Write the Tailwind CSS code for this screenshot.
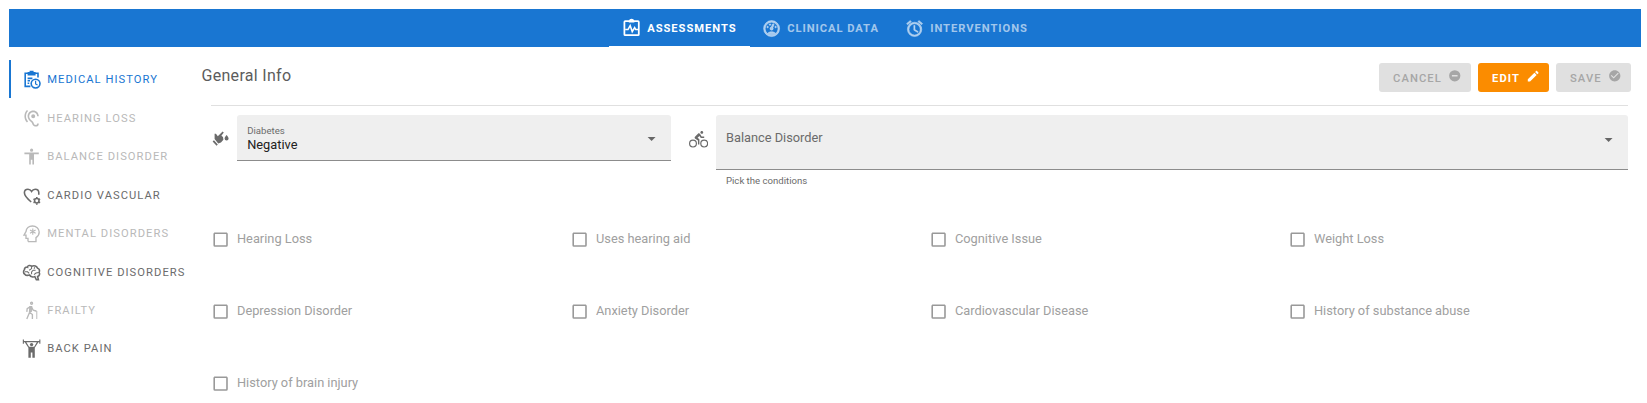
<!DOCTYPE html>
<html lang="en">
<head>
<meta charset="utf-8">
<title>Medical History</title>
<script src="https://cdn.jsdelivr.net/npm/@tailwindcss/browser@4"></script>
</head>
<body class="bg-white h-[403px] overflow-hidden font-[Roboto,sans-serif] px-[9px] pt-[9px]">
<svg class="hidden">
  <symbol id="box" viewBox="0 0 24 24"><path d="M19,3H5C3.89,3 3,3.89 3,5V19A2,2 0 0,0 5,21H19A2,2 0 0,0 21,19V5C21,3.89 20.1,3 19,3M19,5V19H5V5H19Z"/></symbol>
  <symbol id="down" viewBox="0 0 24 24"><path d="M7,10L12,15L17,10H7Z"/></symbol>
</svg>
<header class="flex h-[38px] w-[1632px] justify-center bg-[#1976d2] text-[11.2px] leading-none font-bold tracking-[0.95px] text-white">
  <div class="flex w-[141px] items-center border-b border-white pl-[13px] pt-[2px]">
    <svg class="size-[19.2px] mr-[6px] mb-px fill-none stroke-current stroke-[2.2]" viewBox="0 0 24 24"><rect x="3" y="4" width="18" height="17.5" rx="1"/><path d="M8.500 4.500H15.500M10 3.500C10 1.500 14 1.500 14 3.500"/><path d="M4 14.500H7.500L10.200 9.500L12.800 17L15.800 12L17.200 14.500H20" stroke-width="1.900"/></svg>
    <span class="pt-px">ASSESSMENTS</span>
  </div>
  <div class="flex w-[142px] items-center pl-[12px] pt-px text-white/60">
    <svg class="size-[19.2px] mr-[6px] fill-current" viewBox="0 0 24 24"><path d="M12,2A10,10 0 0,0 2,12A10,10 0 0,0 12,22A10,10 0 0,0 22,12A10,10 0 0,0 12,2M12,4A8,8 0 0,1 20,12C20,14.4 19,16.5 17.3,18C15.900,16.700 14,16 12,16C10,16 8.200,16.700 6.700,18C5,16.500 4,14.400 4,12A8,8 0 0,1 12,4M14,5.890C13.620,5.900 13.260,6.150 13.100,6.540L11.810,9.770L11.710,10C11,10.130 10.410,10.600 10.140,11.260C9.730,12.290 10.230,13.450 11.260,13.860C12.290,14.270 13.450,13.770 13.860,12.740C14.120,12.080 14,11.320 13.570,10.760L13.670,10.500L14.960,7.290L14.970,7.260C15.170,6.750 14.920,6.170 14.410,5.960C14.280,5.910 14.150,5.890 14,5.890M10,6A1,1 0 0,0 9,7A1,1 0 0,0 10,8A1,1 0 0,0 11,7A1,1 0 0,0 10,6M7,9A1,1 0 0,0 6,10A1,1 0 0,0 7,11A1,1 0 0,0 8,10A1,1 0 0,0 7,9M17,9A1,1 0 0,0 16,10A1,1 0 0,0 17,11A1,1 0 0,0 18,10A1,1 0 0,0 17,9Z" class="stroke-current stroke-[0.8]"/></svg>
    <span>CLINICAL DATA</span>
  </div>
  <div class="flex w-[149px] items-center pl-[13px] pt-px text-white/60">
    <svg class="size-[19.2px] mr-[6px] fill-current" viewBox="0 0 24 24"><path class="stroke-current stroke-[0.7]" d="M12,20A7,7 0 0,1 5,13A7,7 0 0,1 12,6A7,7 0 0,1 19,13A7,7 0 0,1 12,20M12,4A9,9 0 0,0 3,13A9,9 0 0,0 12,22A9,9 0 0,0 21,13A9,9 0 0,0 12,4M12.5,8H11V14L15.750,16.850L16.500,15.620L12.500,13.250V8M7.880,3.390L6.600,1.860L2,5.710L3.290,7.240L7.880,3.390M22,5.720L17.400,1.860L16.110,3.390L20.710,7.250L22,5.720Z"/></svg>
    <span>INTERVENTIONS</span>
  </div>
</header>
<div class="flex">
  <nav class="mt-[13px] w-[192.5px] shrink-0 text-[11.2px] leading-none font-normal tracking-[1.05px] whitespace-nowrap text-[#6b6b6b]">
    <div class="flex h-[38.4px] items-center gap-[6px] border-l-2 border-[#1976d2] pl-[11px] pt-px text-[#1976d2]">
      <svg class="size-[19.2px] fill-none stroke-current stroke-2" viewBox="0 0 24 24"><path d="M10.500 20.500H4V4H20V9.500M8 3.500H16V6H8ZM10.500 3V1.800H13.500V3M7 10.500H13M7 13.500H10M7 16.500H9"/><circle cx="17" cy="17" r="5.500"/><path d="M17 13.500V17.500L19.500 18.800" stroke-width="1.500"/></svg>
      <span>MEDICAL HISTORY</span>
    </div>
    <div class="flex h-[38.4px] items-center gap-[6px] pl-[13px] pt-[2px] text-[#b9b9b9]">
      <svg class="size-[19.2px] fill-current" viewBox="0 0 24 24"><path d="M17,20C16.710,20 16.440,19.940 16.240,19.850C15.530,19.500 15.030,18.970 14.530,17.470C14,15.910 13.060,15.180 12.140,14.470C11.350,13.860 10.530,13.230 9.820,11.940C9.290,11 9,9.930 9,9C9,6.200 11.200,4 14,4C16.800,4 19,6.200 19,9H21C21,5.070 17.930,2 14,2C10.070,2 7,5.070 7,9C7,10.260 7.380,11.650 8.070,12.900C9,14.550 10.050,15.380 10.920,16.050C11.730,16.670 12.310,17.120 12.630,18.100C13.230,19.920 14,20.940 15.360,21.650C15.870,21.880 16.430,22 17,22A4,4 0 0,0 21,18H19A2,2 0 0,1 17,20M7.640,2.640L6.220,1.220C4.230,3.210 3,5.960 3,9C3,12.040 4.230,14.790 6.220,16.780L7.630,15.370C6,13.740 5,11.500 5,9C5,6.500 6,4.260 7.640,2.640M11.500,9A2.500,2.500 0 0,0 14,11.500A2.500,2.500 0 0,0 16.500,9A2.500,2.500 0 0,0 14,6.500A2.500,2.500 0 0,0 11.500,9Z"/></svg>
      <span>HEARING LOSS</span>
    </div>
    <div class="flex h-[38.4px] items-center gap-[6px] pl-[13px] pt-[1.6px] text-[#b9b9b9]">
      <svg class="size-[19.2px] fill-current" viewBox="0 0 24 24"><path d="M12 2a2 2 0 1 1 0 4a2 2 0 0 1 0-4M21 9H15V22H13V16H11V22H9V9H3V7H21Z"/></svg>
      <span>BALANCE DISORDER</span>
    </div>
    <div class="flex h-[38.4px] items-center gap-[6px] pl-[13px] pt-[2px]">
      <svg class="size-[19.2px] fill-none stroke-current stroke-2" viewBox="0 0 24 24"><path d="M11.500 20C5 14.500 3 12 3 8.500C3 5.500 5 4 7.500 4C9.500 4 11 5 12 6.700C13 5 14.500 4 16.500 4C19 4 21 5.500 21 8.500V11"/><circle cx="18.500" cy="18.500" r="2.800"/><path d="M18.500 13.700V15.200M18.500 21.800V23.300M14.400 16.100L15.700 16.900M21.300 20.100L22.600 20.900M14.400 20.900L15.700 20.100M21.300 16.900L22.600 16.100"/></svg>
      <span>CARDIO VASCULAR</span>
    </div>
    <div class="flex h-[38.4px] items-center gap-[6px] pl-[13px] pt-[2px] text-[#b9b9b9]">
      <svg class="size-[19.2px] fill-none stroke-current stroke-[1.7]" viewBox="0 0 24 24"><path d="M7.500 22V18H5V14H2.500L5 9.500C5.300 5.500 8.500 2.500 13 2.500C17.700 2.500 21.500 5.500 21.500 10C21.500 13 20 15.500 17.500 17V22H7.500"/><path d="M13.500 5.500V13.500M10 7.500L17 11.500M10 11.500L17 7.500" stroke-width="1.400"/></svg>
      <span>MENTAL DISORDERS</span>
    </div>
    <div class="flex h-[38.4px] items-center gap-[6px] pl-[13px] pt-[2px]">
      <svg class="size-[19.2px] fill-none stroke-current stroke-2" viewBox="0 0 24 24"><path d="M12 4C10 2.500 7.500 3 6.500 5C4.500 5 3 6.500 3 8.500C1.500 10 1.500 13 3.500 14C5 16 8 15.500 9.500 15C11 17.500 14 18 16 17L18 21H20.500L19.500 17C22 16 22.500 13.500 21.500 12C22.500 9 21.500 7 19.500 6.500C18.500 4 15.500 2.500 12 4Z"/><path d="M12 4V7L9 9M6.500 5L8 6.500M3.500 11H7L9 13M12 11L14 9H17M16 5.500L15 7M21 12L17.500 12.500L15 14.500M12 11V14" stroke-width="1.300"/></svg>
      <span>COGNITIVE DISORDERS</span>
    </div>
    <div class="flex h-[38.4px] items-center gap-[6px] pl-[13px] pt-[3px] text-[#b9b9b9]">
      <svg class="size-[19.2px] fill-none stroke-current stroke-[1.7]" viewBox="0 0 24 24"><circle cx="12" cy="2.800" r="1.200"/><path d="M10.500 7L6.500 9.500L6 13.500M11 7L9.500 14L6 22.500M9.500 14L13 17V22.500M12 8L14 11.500L17.500 12.500"/><path d="M10 7H12L11.500 13H9.500Z"/><path d="M17 12.500H18.500V22.500" stroke-width="1.200"/></svg>
      <span>FRAILTY</span>
    </div>
    <div class="flex h-[38.4px] items-center gap-[6px] pl-[13px] pt-[2px]">
      <svg class="size-[19.2px] fill-current" viewBox="0 0 24 24"><circle cx="12" cy="7" r="2.100"/><path d="M1 0.500H2.400V2.500H21.600V0.500H23V6H21.600V4H20.500L16 11V23.500H13V17H11V23.500H8V11L3.500 4H2.400V6H1ZM5.500 4L8.800 9.800H15.200L18.500 4Z"/></svg>
      <span>BACK PAIN</span>
    </div>
  </nav>
  <main class="w-[1430px]">
    <div class="flex h-[58px] w-[1429.5px] items-start justify-between pt-4 text-[11.2px] leading-none tracking-[1.1px]">
      <h1 class="pt-[4px] text-[16px] leading-[17px] font-normal tracking-[0.3px] text-[#5c5c5c]">General Info</h1>
      <div class="flex gap-[7px]">
        <div class="flex h-[29px] w-[92px] items-center justify-between rounded-[3px] bg-[#e0e0e0] pr-[10px] pl-[14px] font-medium text-[#a6a6a6]"><span class="pt-[2px]">CANCEL</span><svg class="mb-[3px] size-[13.5px] fill-current" viewBox="0 0 24 24"><path d="M17,13.500H7V10.500H17M12,2A10,10 0 0,0 2,12A10,10 0 0,0 12,22A10,10 0 0,0 22,12A10,10 0 0,0 12,2Z"/></svg></div>
        <div class="flex h-[29px] w-[71px] items-center justify-between rounded-[3px] bg-[#fb8c00] pr-[9px] pl-[14px] font-bold text-white"><span class="pt-[2px]">EDIT</span><svg class="mb-[3px] size-[14.4px] fill-current" viewBox="0 0 24 24"><path d="M20.710,7.040C21.100,6.650 21.100,6 20.710,5.630L18.370,3.290C18,2.900 17.350,2.900 16.960,3.290L15.120,5.120L18.870,8.870M3,17.250V21H6.750L17.810,9.930L14.060,6.180L3,17.250Z"/></svg></div>
        <div class="flex h-[29px] w-[75px] items-center justify-between rounded-[3px] bg-[#e0e0e0] pr-[10px] pl-[14px] font-medium text-[#a6a6a6]"><span class="pt-[2px]">SAVE</span><svg class="mb-[3px] size-[13.5px] fill-current" viewBox="0 0 24 24"><path d="M12 2C6.500 2 2 6.500 2 12S6.500 22 12 22 22 17.500 22 12 17.500 2 12 2M10 17L5 12L6.410 10.590L10 14.170L17.590 6.580L19 8L10 17Z"/></svg></div>
      </div>
    </div>
    <div class="ml-[9.5px] w-[1417px]">
      <div class="h-px bg-[#e0e0e0]"></div>
      <div class="mt-[9px] flex w-[1418px] items-start text-[12.8px] leading-none text-[#6b6b6b]">
        <svg class="mt-[14px] mr-[7px] size-[19.2px] shrink-0 fill-current" viewBox="0 0 24 24"><path d="M2 15.500L3.700 14L8.500 19.300L7 21ZM4.500 12.500L4.500 6L6.200 5.800L8.500 9L14.500 3L16 4.300L13 8.500L15 10L15.500 13.500L12.500 17L9 18ZM19.500 7.500C21 9.500 22 10.500 22 12A2.500 2.500 0 0 1 17 12C17 10.500 18 9.500 19.500 7.500Z"/></svg>
        <div class="flex h-[46px] w-[434px] shrink-0 items-center justify-between rounded-t-[3px] border-b border-[#8c8c8c] bg-[#efefef] pr-[10px] pl-[10px]">
          <div><div class="pt-px text-[9.6px] leading-[12px]">Diabetes</div><div class="leading-[15px] text-[#212121]">Negative</div></div>
          <svg class="mt-[2px] size-[19.2px]"><use href="#down" fill="#666"/></svg>
        </div>
        <svg class="mt-[15px] mr-[7.6px] ml-[18px] size-[19.2px] shrink-0 fill-current" viewBox="0 0 24 24"><path d="M5,20.500A3.500,3.500 0 0,1 1.500,17A3.500,3.500 0 0,1 5,13.500A3.500,3.500 0 0,1 8.500,17A3.500,3.500 0 0,1 5,20.500M5,12A5,5 0 0,0 0,17A5,5 0 0,0 5,22A5,5 0 0,0 10,17A5,5 0 0,0 5,12M14.800,10H19V8.200H15.800L13.860,4.930C13.570,4.430 13,4.100 12.400,4.100C11.930,4.100 11.500,4.290 11.200,4.600L7.500,8.290C7.190,8.600 7,9 7,9.500C7,10.130 7.330,10.660 7.850,10.970L11.200,13V18H13V11.500L10.750,9.850L13.070,7.500M19,20.500A3.500,3.500 0 0,1 15.500,17A3.500,3.500 0 0,1 19,13.500A3.500,3.500 0 0,1 22.500,17A3.500,3.500 0 0,1 19,20.500M19,12A5,5 0 0,0 14,17A5,5 0 0,0 19,22A5,5 0 0,0 24,17A5,5 0 0,0 19,12M16,4.800C17,4.800 17.800,4 17.800,3C17.800,2 17,1.200 16,1.200C15,1.200 14.200,2 14.200,3C14.200,4 15,4.800 16,4.800Z"/></svg>
        <div class="w-[912px] shrink-0">
          <div class="flex h-[55px] items-start justify-between rounded-t-[3px] border-b border-[#8c8c8c] bg-[#efefef] px-[10px] pt-[14px]">
            <span class="pt-[3px]">Balance Disorder</span>
            <svg class="mt-px size-[19.2px]"><use href="#down" fill="#666"/></svg>
          </div>
          <div class="pt-[5px] pl-[10px] text-[9.6px] leading-[11px]">Pick the conditions</div>
        </div>
      </div>
      <div class="mt-[43px] grid w-[1436px] grid-cols-4 text-[12.8px] leading-[20px] text-[#a0a0a0]">
        <div class="flex h-[72px] items-start gap-[6.8px]"><svg class="mt-[1px] size-[19.2px]"><use href="#box" fill="#999"/></svg>Hearing Loss</div>
        <div class="flex h-[72px] items-start gap-[6.8px]"><svg class="mt-[1px] size-[19.2px]"><use href="#box" fill="#999"/></svg>Uses hearing aid</div>
        <div class="flex h-[72px] items-start gap-[6.8px]"><svg class="mt-[1px] size-[19.2px]"><use href="#box" fill="#999"/></svg>Cognitive Issue</div>
        <div class="flex h-[72px] items-start gap-[6.8px]"><svg class="mt-[1px] size-[19.2px]"><use href="#box" fill="#999"/></svg>Weight Loss</div>
        <div class="flex h-[72px] items-start gap-[6.8px]"><svg class="mt-[1px] size-[19.2px]"><use href="#box" fill="#999"/></svg>Depression Disorder</div>
        <div class="flex h-[72px] items-start gap-[6.8px]"><svg class="mt-[1px] size-[19.2px]"><use href="#box" fill="#999"/></svg>Anxiety Disorder</div>
        <div class="flex h-[72px] items-start gap-[6.8px]"><svg class="mt-[1px] size-[19.2px]"><use href="#box" fill="#999"/></svg>Cardiovascular Disease</div>
        <div class="flex h-[72px] items-start gap-[6.8px]"><svg class="mt-[1px] size-[19.2px]"><use href="#box" fill="#999"/></svg>History of substance abuse</div>
        <div class="flex items-start gap-[6.8px]"><svg class="mt-[1px] size-[19.2px]"><use href="#box" fill="#999"/></svg>History of brain injury</div>
      </div>
    </div>
  </main>
</div>
</body>
</html>
